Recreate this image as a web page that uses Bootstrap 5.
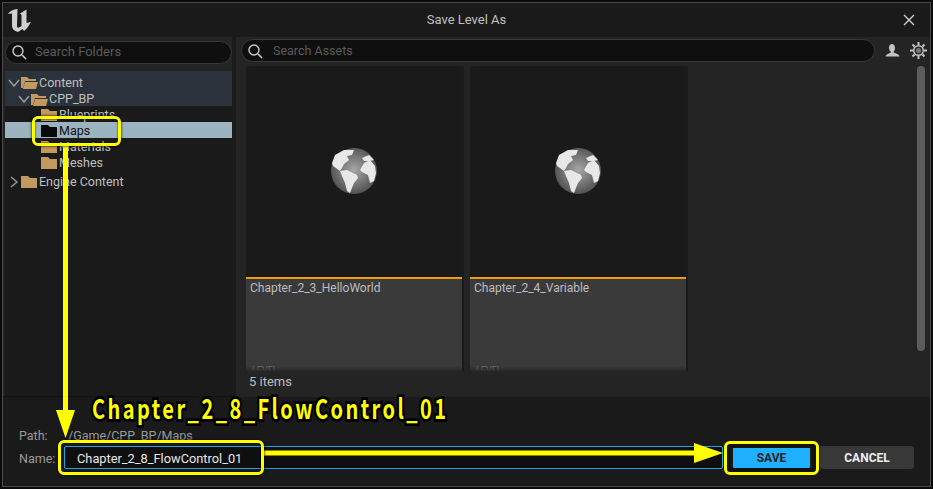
<!DOCTYPE html>
<html lang="en">
<head>
    <meta charset="UTF-8">
    <title>Save Level As</title>
    <link rel="stylesheet" href="https://cdn.jsdelivr.net/npm/bootstrap@5.3.3/dist/css/bootstrap.min.css">
    <style>
        html, body { height: 489px; overflow: hidden; background: #0a0a0a; }
        body { font-family: Roboto, "Liberation Sans", sans-serif; font-size: 12px; color: #c0c0c0; }
        .ue-window { position: relative; width: 929px; height: 485px; margin: 2px; border: 1px solid #4a4a4a; background: #1a1a1a; }
        .ue-title { position: relative; height: 34px; padding: 0 13px 0 4px; }
        .ue-title-text { position: absolute; left: 0; right: 0; text-align: center; color: #c0c0c0; font-size: 13px; margin-top: -1px; }
        .ue-main { height: 360px; gap: 4px; }
        .ue-left { width: 229px; background: #242424; border-bottom: 1px solid #111; }
        .ue-right { width: 694px; background: #242424; }
        .ue-search { height: 23px; border: 1px solid #383838; border-radius: 12px; background: #0f0f0f; color: #5a5a5a; font-size: 13px; }
        .ue-left .ue-search { margin: 4px 0 7px 2px; padding: 0 0 1px 5px; gap: 8px; }
        .ue-tree { background: #1a1a1a; height: 325px; margin-left: 2px; }
        .ue-row { height: 16px; padding-top: 2px; color: #c0c0c0; font-size: 12.5px; line-height: 14px; gap: 1px; }
        .ue-row.ue-open { background: #2b323b; }
        .ue-row.ue-first { height: 18px; padding-top: 5px; }
        .ue-row.ue-second { height: 17px; padding-top: 3px; }
        .ue-row.ue-sel { background: #9cb4c0; color: #111; }
        .ue-lv0 { padding-left: 3px; }
        .ue-lv1 { padding-left: 13px; }
        .ue-lv2 { padding-left: 36px; }
        .ue-gap { margin-top: 3px; }
        .ue-right-top { height: 29px; padding: 2px 0 0 5px; }
        .ue-right-top .ue-search { width: 634px; padding: 1px 0 0 5px; gap: 10px; font-size: 12.5px; }
        .ue-person { margin: 4px 0 0 9px; }
        .ue-gear { margin: 3px 0 0 10px; }
        .ue-tiles { height: 306px; padding-left: 10px; gap: 8px; }
        .ue-tile { width: 216px; height: 306px; overflow: hidden; box-shadow: 2px 0 0 #1b1b1b; }
        .ue-thumb { height: 211px; background: #1a1a1a; padding-top: 82px; border-top-left-radius: 4px; border-top-right-radius: 4px; }
        .ue-label { position: relative; height: 95px; background: #3a3a3a; border-top: 2px solid #f29a00; padding: 1px 4px 0; color: #bdbdbd; font-size: 12px; line-height: 17px; }
        .ue-kind { position: absolute; left: 6px; bottom: -3px; color: #777; font-size: 9px; line-height: 9px; }
        .ue-fade { position: absolute; left: 0; right: 0; bottom: 0; height: 6px; background: linear-gradient(rgba(36,36,36,0), #242424); }
        .ue-scroll { position: absolute; left: 914px; top: 63px; width: 8px; height: 285px; background: #5c5c5c; border-radius: 4px; }
        .ue-status { height: 23px; padding: 1px 10px 0 13px; background: #242424; color: #bdbdbd; font-size: 13px; line-height: 18px; }
        .ue-form { padding: 30px 0 0 16px; }
        .ue-form-row { height: 23px; gap: 4px; color: #9a9a9a; font-size: 12.5px; }
        .ue-path { height: 19px; }
        .ue-field-label { width: 41px; padding-top: 4px; }
        .ue-path .ue-field-label { padding-top: 0; }
        .ue-path-val { margin-left: 4px; }
        .ue-input { width: 659px; height: 23px; background: #0f0f0f; border: 1px solid #26a0e0; border-radius: 2px; padding: 1px 0 0 12px; color: #e8e8e8; font-size: 12.8px; line-height: 21px; }
        .ue-btn { height: 23px; border-radius: 3px; font-weight: 700; font-size: 12px; line-height: 24px; text-align: center; }
        .ue-save { width: 77px; margin-left: 6px; background: #1fb0ff; color: #222; }
        .ue-cancel { width: 94px; margin-left: 6px; background: #383838; color: #eee; }
        .ue-ybox { position: absolute; border: 3px solid #ffff00; border-radius: 6px; box-shadow: 0 0 3px #000, inset 0 0 2px #000; }
        .ue-box-maps { left: 29px; top: 113px; width: 89px; height: 30px; }
        .ue-box-name { left: 55px; top: 437px; width: 206px; height: 35px; }
        .ue-box-save { left: 721px; top: 438px; width: 95px; height: 34px; box-shadow: inset 0 0 0 4px #111; }
        .ue-arrows { position: absolute; left: 0; top: 0; width: 929px; height: 485px; pointer-events: none; }
        .ue-big { position: absolute; left: 89px; top: 389px; color: #ffff00; font-family: "Noto Sans CJK JP", sans-serif; font-weight: 700; font-size: 20px; line-height: 24px; letter-spacing: 2.45px; white-space: nowrap; transform: scaleY(1.35); transform-origin: left top; -webkit-text-stroke: 4px #000; paint-order: stroke fill; }
    </style>
</head>
<body>
<div class="ue-window d-flex flex-column">
    <div class="ue-title d-flex align-items-center justify-content-between flex-shrink-0">
        <svg width="25" height="25" viewBox="0 0 25 25"><path d="M1 6C3 3 6 1.500 10.500 1L10 18C10 20 11 20 13 19L14.500 18V7L13 5.500 19.500 1.500V15L24 14C22 17 21 20 17 23L15.500 21 11 24C7 23 5 21 5 18V5.500Z" fill="#d0d0d0"/></svg>
        <span class="ue-title-text">Save Level As</span>
        <svg width="16" height="16" viewBox="0 0 16 16"><path d="M3 3l10 10M13 3L3 13" stroke="#d0d0d0" stroke-width="1.4" fill="none"/></svg>
    </div>
    <div class="ue-main d-flex flex-shrink-0">
        <div class="ue-left flex-shrink-0">
            <div class="ue-search d-flex align-items-center">
                <svg width="16" height="16" viewBox="0 0 16 16"><circle cx="7" cy="7" r="5" stroke="#ccc" stroke-width="1.4" fill="none"/><path d="M11 11l4 4" stroke="#ccc" stroke-width="1.6"/></svg>
                <span>Search Folders</span>
            </div>
            <div class="ue-tree">
                <div class="ue-row ue-open ue-first ue-lv0 d-flex align-items-center">
                    <svg width="12" height="12" viewBox="0 0 12 12"><path d="M1 3l5 6 5-6" stroke="#999" stroke-width="1.5" fill="none"/></svg>
                    <svg width="17" height="13" viewBox="0 0 17 13"><path d="M0 1h6l2 2h7v2H4L2 12H0zM4 6h13l-2 7H2z" fill="#c29a5f"/></svg>
                    <span>Content</span>
                </div>
                <div class="ue-row ue-open ue-second ue-lv1 d-flex align-items-center">
                    <svg width="12" height="12" viewBox="0 0 12 12"><path d="M1 3l5 6 5-6" stroke="#999" stroke-width="1.5" fill="none"/></svg>
                    <svg width="17" height="13" viewBox="0 0 17 13"><path d="M0 1h6l2 2h7v2H4L2 12H0zM4 6h13l-2 7H2z" fill="#c29a5f"/></svg>
                    <span>CPP_BP</span>
                </div>
                <div class="ue-row ue-lv2 d-flex align-items-center">
                    <svg width="17" height="12" viewBox="0 0 17 12"><path d="M0 0h7l2 2h7v10H0z" fill="#c29a5f"/></svg>
                    <span>Blueprints</span>
                </div>
                <div class="ue-row ue-sel ue-lv2 d-flex align-items-center">
                    <svg width="17" height="12" viewBox="0 0 17 12"><path d="M0 0h7l2 2h7v10H0z" fill="#0a0a0a"/></svg>
                    <span>Maps</span>
                </div>
                <div class="ue-row ue-lv2 d-flex align-items-center">
                    <svg width="17" height="12" viewBox="0 0 17 12"><path d="M0 0h7l2 2h7v10H0z" fill="#c29a5f"/></svg>
                    <span>Materials</span>
                </div>
                <div class="ue-row ue-lv2 d-flex align-items-center">
                    <svg width="17" height="12" viewBox="0 0 17 12"><path d="M0 0h7l2 2h7v10H0z" fill="#c29a5f"/></svg>
                    <span>Meshes</span>
                </div>
                <div class="ue-row ue-gap ue-lv0 d-flex align-items-center">
                    <svg width="12" height="12" viewBox="0 0 12 12"><path d="M3 1l6 5-6 5" stroke="#999" stroke-width="1.5" fill="none"/></svg>
                    <svg width="17" height="12" viewBox="0 0 17 12"><path d="M0 0h7l2 2h7v10H0z" fill="#c29a5f"/></svg>
                    <span>Engine Content</span>
                </div>
            </div>
        </div>
        <div class="ue-right flex-shrink-0">
            <div class="ue-right-top d-flex align-items-start">
                <div class="ue-search d-flex align-items-center flex-shrink-0">
                    <svg width="16" height="16" viewBox="0 0 16 16"><circle cx="7" cy="7" r="5" stroke="#ccc" stroke-width="1.4" fill="none"/><path d="M11 11l4 4" stroke="#ccc" stroke-width="1.6"/></svg>
                    <span>Search Assets</span>
                </div>
                <svg class="ue-person flex-shrink-0" width="16" height="16" viewBox="0 0 16 16"><path d="M5 5C5 2 6.500 1 8 1s3 1 3 4c0 2-1 3-1.500 4 1 1.500 5.500 1.500 6 4.500H1.500C2 10.500 6.500 10.500 7 9 6 8 5 7 5 5z" fill="#c4c4c4"/></svg>
                <svg class="ue-gear flex-shrink-0" width="17" height="17" viewBox="0 0 17 17"><circle cx="8.500" cy="8.500" r="5.500" fill="#c4c4c4"/><circle cx="8.500" cy="8.500" r="4" fill="#2a2a2a"/><circle cx="8.500" cy="8.500" r="2.500" fill="#777"/><path d="M8.500 0v3M8.500 14v3M0 8.500h3M14 8.500h3M2.500 2.500l2 2M12.500 12.500l2 2M14.500 2.500l-2 2M4.500 12.500l-2 2" stroke="#c4c4c4" stroke-width="2"/></svg>
            </div>
            <div class="ue-tiles d-flex">
                <div class="ue-tile">
                    <div class="ue-thumb text-center">
                        <svg width="46" height="46" viewBox="0 0 46 46"><defs><radialGradient id="g1" cx="50%" cy="48%" r="52%"><stop offset="0" stop-color="#a8a8a8"/><stop offset="1" stop-color="#525252"/></radialGradient></defs><circle cx="23" cy="23" r="23" fill="url(#g1)"/><path d="M1 15L4 7 13 2H23L21 7 16 8 18 12 13 16 11 20 9 23 5 20 2 18zM9 23L16 22 26 27 27 30 23 35 19 45 16 43 14 35 11 28zM29 22L33 15 39 12 44 18 45 25 43 33 39 35 37 27 31 24zM31 10L38 7 43 12 39 13 33 13z" fill="#e8e8e8"/></svg>
                    </div>
                    <div class="ue-label">Chapter_2_3_HelloWorld<span class="ue-kind">LEVEL</span><div class="ue-fade"></div></div>
                </div>
                <div class="ue-tile">
                    <div class="ue-thumb text-center">
                        <svg width="46" height="46" viewBox="0 0 46 46"><circle cx="23" cy="23" r="23" fill="url(#g1)"/><path d="M1 15L4 7 13 2H23L21 7 16 8 18 12 13 16 11 20 9 23 5 20 2 18zM9 23L16 22 26 27 27 30 23 35 19 45 16 43 14 35 11 28zM29 22L33 15 39 12 44 18 45 25 43 33 39 35 37 27 31 24zM31 10L38 7 43 12 39 13 33 13z" fill="#e8e8e8"/></svg>
                    </div>
                    <div class="ue-label">Chapter_2_4_Variable<span class="ue-kind">LEVEL</span><div class="ue-fade"></div></div>
                </div>
            </div>
            <div class="ue-status">5 items</div>
        </div>
    </div>
    <div class="ue-form">
        <div class="ue-form-row ue-path d-flex align-items-center">
            <span class="ue-field-label">Path:</span>
            <span class="ue-path-val">/Game/CPP_BP/Maps</span>
        </div>
        <div class="ue-form-row d-flex align-items-center">
            <span class="ue-field-label">Name:</span>
            <div class="ue-input">Chapter_2_8_FlowControl_01</div>
            <div class="ue-btn ue-save">SAVE</div>
            <div class="ue-btn ue-cancel">CANCEL</div>
        </div>
    </div>
    <div class="ue-scroll"></div>

    <svg class="ue-arrows" viewBox="0 0 929 485">
        <path d="M62.500 143v265M260 450h432" stroke="#ffff00" stroke-width="5" fill="none"/>
        <path d="M53 407h19l-9.500 28zM691 440l29 10-29 10z" fill="#ffff00"/>
    </svg>
    <div class="ue-ybox ue-box-maps"></div>
    <div class="ue-ybox ue-box-name"></div>
    <div class="ue-ybox ue-box-save"></div>
    <div class="ue-big">Chapter_2_8_FlowControl_01</div>
</div>
</body>
</html>
